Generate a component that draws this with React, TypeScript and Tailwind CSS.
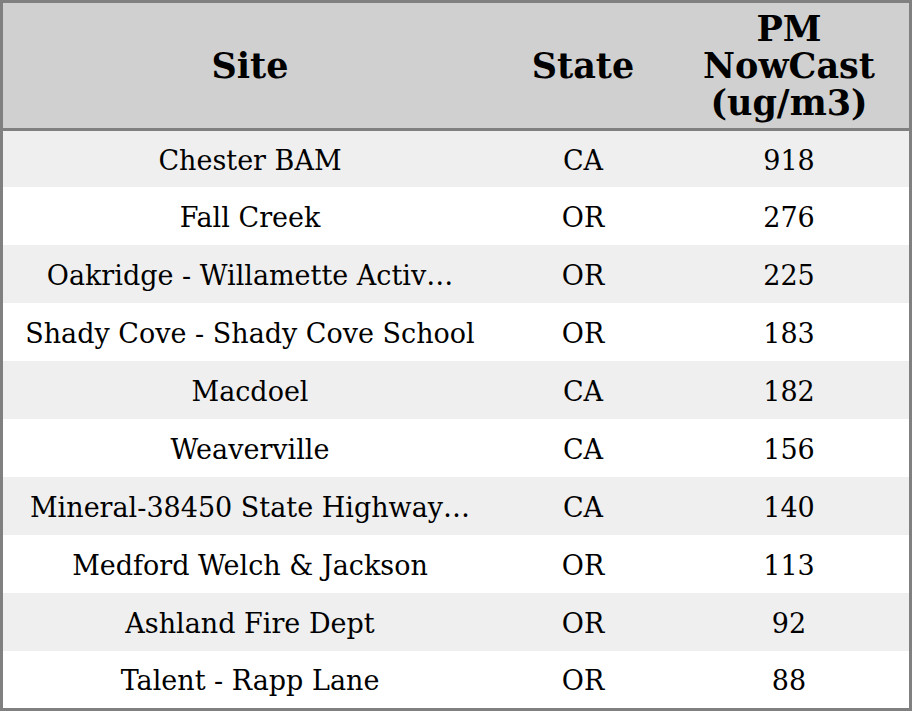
const rows = [
  { site: 'Chester BAM', state: 'CA', pm: 918 },
  { site: 'Fall Creek', state: 'OR', pm: 276 },
  { site: 'Oakridge - Willamette Activ…', state: 'OR', pm: 225 },
  { site: 'Shady Cove - Shady Cove School', state: 'OR', pm: 183 },
  { site: 'Macdoel', state: 'CA', pm: 182 },
  { site: 'Weaverville', state: 'CA', pm: 156 },
  { site: 'Mineral-38450 State Highway…', state: 'CA', pm: 140 },
  { site: 'Medford Welch & Jackson', state: 'OR', pm: 113 },
  { site: 'Ashland Fire Dept', state: 'OR', pm: 92 },
  { site: 'Talent - Rapp Lane', state: 'OR', pm: 88 },
];

export default function App() {
  return (
    <div className="w-[912px] h-[711px] bg-white font-['DejaVu_Serif',serif] text-black">
      <div className="border-[3px] border-[#808080] h-[711px]">
        {/* Header */}
        <div className="grid grid-cols-[494px_172px_240px] h-[125px] bg-[#d0d0d0] border-b-[3px] border-[#808080] box-content text-[35px] font-bold leading-[37px] text-center">
          <div className="flex items-center justify-center">Site</div>
          <div className="flex items-center justify-center">State</div>
          <div className="flex items-center justify-center">
            PM<br />NowCast<br />(ug/m3)
          </div>
        </div>

        {/* Rows */}
        {rows.map((r, i) => (
          <div
            key={r.site}
            className={`grid grid-cols-[494px_172px_240px] items-center text-center text-[27px] pt-[4px] ${
              i === 0 || i === rows.length - 1 ? 'h-[56px]' : 'h-[58px]'
            } ${i % 2 === 0 ? 'bg-[#efefef]' : 'bg-white'}`}
          >
            <div className="whitespace-nowrap">{r.site}</div>
            <div>{r.state}</div>
            <div>{r.pm}</div>
          </div>
        ))}
      </div>
    </div>
  );
}
